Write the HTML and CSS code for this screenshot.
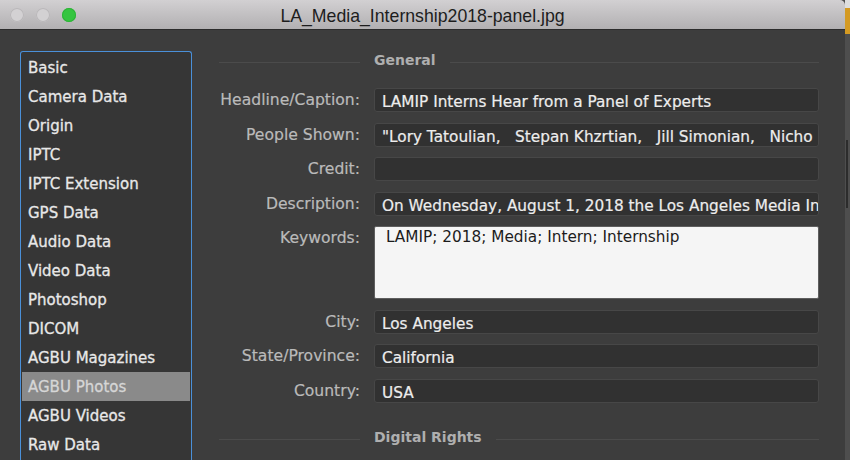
FILE: index.html
```html
<!DOCTYPE html>
<html lang="en">
<head>
  <meta charset="UTF-8" />
  <title>LA_Media_Internship2018-panel.jpg</title>
  <link rel="stylesheet" href="styles.css">
</head>
<body>
  <div class="screen">
    <div class="window">
      <div class="titlebar">
        <div class="lights">
          <span class="light"></span>
          <span class="light"></span>
          <span class="light green"></span>
        </div>
        <div class="title">LA_Media_Internship2018-panel.jpg</div>
        <div></div>
      </div>

      <div class="main">
        <ul class="panels">
          <li>Basic</li>
          <li>Camera Data</li>
          <li>Origin</li>
          <li>IPTC</li>
          <li>IPTC Extension</li>
          <li>GPS Data</li>
          <li>Audio Data</li>
          <li>Video Data</li>
          <li>Photoshop</li>
          <li>DICOM</li>
          <li>AGBU Magazines</li>
          <li class="active">AGBU Photos</li>
          <li>AGBU Videos</li>
          <li>Raw Data</li>
        </ul>

        <div class="form">
          <div class="section">
            <span class="rule first"></span>
            <span class="section-name">General</span>
            <span class="rule"></span>
          </div>

          <div class="fields">
            <label>Headline/Caption:</label>
            <div class="field">LAMIP Interns Hear from a Panel of Experts</div>
            <label>People Shown:</label>
            <div class="field">"Lory Tatoulian,   Stepan Khzrtian,   Jill Simonian,   Nicho</div>
            <label>Credit:</label>
            <div class="field"></div>
            <label>Description:</label>
            <div class="field">On Wednesday, August 1, 2018 the Los Angeles Media In</div>
            <label>Keywords:</label>
            <div class="field keywords">LAMIP; 2018; Media; Intern; Internship</div>
            <label>City:</label>
            <div class="field">Los Angeles</div>
            <label>State/Province:</label>
            <div class="field">California</div>
            <label>Country:</label>
            <div class="field">USA</div>
          </div>

          <div class="section digital">
            <span class="rule first"></span>
            <span class="section-name">Digital Rights</span>
            <span class="rule"></span>
          </div>
        </div>
      </div>
    </div>
    <div class="edge"><div class="edge-thumb"></div></div>
  </div>
</body>
</html>
```

FILE: styles.css
```css
body { margin: 0; width: 850px; height: 460px; overflow: hidden; background: #4e4e4e; font-family: "DejaVu Sans", Verdana, sans-serif; }
.screen { display: flex; height: 460px; }
.window { width: 845px; display: flex; flex-direction: column; background: #3d3d3d; border-top-right-radius: 5px; overflow: hidden; }

/* title bar */
.titlebar { height: 29px; flex: none; display: grid; grid-template-columns: 1fr auto 1fr; align-items: center; background: linear-gradient(#d2d0d2, #b2b0b2); border-bottom: 1px solid #2c2c2c; }
.lights { display: flex; gap: 12px; padding-left: 10px; }
.light { width: 14px; height: 14px; border-radius: 50%; background: #d3d1d3; box-shadow: inset 0 0 0 1px #b9b7b9; }
.light.green { background: #35c540; box-shadow: inset 0 0 0 1px #2db337; }
.title { font-family: "Liberation Sans", Arial, sans-serif; font-size: 17.7px; color: #1d1d1d; padding-top: 4px; white-space: nowrap; }

/* body */
.main { flex: 1; display: flex; align-items: flex-start; padding-top: 20px; overflow: hidden; }
.panels { list-style: none; margin: 1px 0 0 20px; padding: 1px; width: 172px; height: 430px; flex: none; box-sizing: border-box; border: 1px solid #4a90d9; border-bottom: 0; border-radius: 3px 3px 0 0; background: #363636; }
.panels li { height: 28px; padding: 1px 0 0 6px; line-height: 29px; font-size: 15px; color: #e8e8e8; -webkit-text-stroke: 0.3px currentColor; white-space: nowrap; }
.panels li.active { background: #8a8a8a; color: #d6d6d6; }

.form { margin-left: 26px; width: 601px; flex: none; }
.section { display: flex; align-items: center; gap: 14px; height: 20px; }
.rule { height: 1px; flex: 1; background: #4b4b4b; margin-top: 4px; }
.rule.first { flex: none; width: 141px; margin-left: 1px; }
.section-name { font-size: 14px; font-weight: bold; line-height: 20px; color: #afafaf; white-space: nowrap; }
.section.digital { margin-top: 24.5px; }

.fields { display: grid; grid-template-columns: 142px 1fr; column-gap: 14px; row-gap: 10.5px; margin-top: 18px; }
.fields label { height: 24px; box-sizing: border-box; padding-top: 1px; text-align: right; font-size: 15.6px; line-height: 23px; color: #bababa; -webkit-text-stroke: 0.2px currentColor; white-space: nowrap; }
.field { height: 24px; box-sizing: border-box; border: 1px solid #474747; border-radius: 3px; background: #313131; padding: 4px 7px 0; font-size: 15.3px; line-height: 18px; color: #ededed; -webkit-text-stroke: 0.2px currentColor; white-space: pre; overflow: hidden; }
.field.keywords { height: 73px; background: #f5f5f5; border-color: #5e5e5e; border-radius: 2px; color: #1c1c1c; padding: 1px 11px 0; line-height: 18px; -webkit-text-stroke: 0; }

/* edge of the window behind */
.edge { width: 5px; background: linear-gradient(#dedede 0 8px, #d49a22 8px 34px, #4e4e4e 34px); }
.edge-thumb { width: 2px; height: 68px; margin: 140px 0 0 1px; background: #2c2c2c; }
```
